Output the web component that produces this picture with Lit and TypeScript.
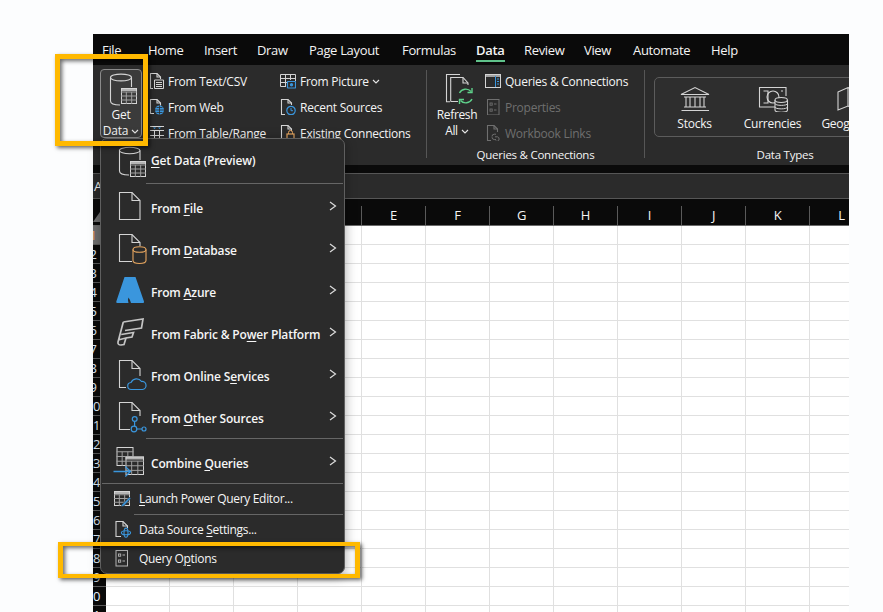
import { LitElement, html, css, svg } from "lit";
import { customElement } from "lit/decorators.js";

const G = "#d4d4d4";
const BLUE = "#3a96dd";
const ORANGE = "#e5a55f";
const GREEN = "#5fd18a";
const DIM = "#6f6f6f";

const line = (d: string, c = G, w = 1.1) => svg`<path d=${d} fill="none" stroke=${c} stroke-width=${w} />`;

const table = (x: number, y: number, w: number, h: number, head = true) => {
  const cw = w / 3;
  const hh = h / 4;
  return svg`
    ${head ? svg`<rect x=${x} y=${y} width=${w} height="3" fill="#b4b4b4" />` : null}
    <rect x=${x + 0.5} y=${y + 0.5} width=${w - 1} height=${h - 1} fill="none" stroke=${G} />
    <path d="M${x + cw} ${y + hh}V${y + h}M${x + 2 * cw} ${y + hh}V${y + h}M${x} ${y + hh}H${x + w}M${x} ${y + 2 * hh}H${x + w}M${x} ${y + 3 * hh}H${x + w}" fill="none" stroke="#a0a0a0" />`;
};

const solidTable = (x: number, y: number, w: number, h: number) => svg`
  <rect x=${x} y=${y} width=${w} height=${h} fill="#2b2b2b" />${table(x, y, w, h)}`;

const cylinder = (x: number, y: number, w: number, h: number, c: string) => svg`
  <path d="M${x} ${y + 3}V${y + h - 3}C${x} ${y + h + 1} ${x + w} ${y + h + 1} ${x + w} ${y + h - 3}V${y + 3}" fill="#2b2b2b" stroke=${c} stroke-width="1.1" />
  <ellipse cx=${x + w / 2} cy=${y + 3} rx=${w / 2} ry="2.8" fill="none" stroke=${c} stroke-width="1.1" />`;

const big = (body: unknown) => html`<svg class="ic34" viewBox="0 0 34 34">${body}</svg>`;
const small = (body: unknown) => html`<svg class="ic20" viewBox="0 0 20 20">${body}</svg>`;
const mini = (body: unknown) => html`<svg class="ic16" viewBox="0 0 16 16">${body}</svg>`;

const dbTable = svg`
  <path d="M6.5 6.5V27C6.5 29.5 10 31 16 31M27 6.5V16" fill="none" stroke=${G} stroke-width="1.1" />
  <ellipse cx="16.7" cy="6.5" rx="10.3" ry="3.2" fill="none" stroke=${G} stroke-width="1.1" />
  ${solidTable(17, 17, 16, 16)}`;

const fileIcon = big(svg`${line("M6.5 3.5H19L27 11.5V30.5H6.5Z")}${line("M19 3.5V11.5H27")}`);
const dbIcon = big(svg`${line("M19 30.5H6.5V3.5H19L27 11.5V15")}${line("M19 3.5V11.5H27")}${cylinder(20, 15.5, 13, 17, ORANGE)}`);
const azureIcon = big(svg`<path d="M11.5 4H22.5L31 28.5Q31.3 30 30 30H18Q17 26.5 15.5 24.5Q14.5 26 15.5 30H4.3Q3 30 3.3 28.5Z" fill=${BLUE} />`);
const fabricIcon = big(svg`${line("M10.3 7L30 4L28.5 13L12 15.5M10.3 7L5 27Q4.5 30 8 30L11 29.5L13 23L19 22L20.5 17.5L8.2 19.5M5 25L13 23", "#c4c4c4", 1.7)}`);
const onlineIcon = big(svg`${line("M13 30.5H6.5V3.5H19L27 11.5V19")}${line("M19 3.5V11.5H27")}${line("M18.5 32.5A3.5 3.5 0 0 1 18 25.5A6 6 0 0 1 28.5 24.5A4 4 0 0 1 29.5 32.5Z", BLUE, 1.2)}`);
const otherIcon = big(svg`${line("M17 30.5H6.5V3.5H19L27 11.5V17")}${line("M19 3.5V11.5H27")}
  <circle cx="21.7" cy="20" r="2.4" fill="none" stroke=${BLUE} stroke-width="1.2" />
  <circle cx="21" cy="30" r="2.8" fill="none" stroke=${BLUE} stroke-width="1.2" />
  <circle cx="31" cy="30" r="2" fill="none" stroke=${BLUE} stroke-width="1.2" />
  ${line("M21.6 22.4V27.2M23.8 30H29", BLUE, 1.2)}`);
const combineIcon = big(svg`${table(3.5, 3, 17, 19, false)}${solidTable(12.5, 12.5, 18.5, 18.5)}
  ${line("M0.5 27.5H17M12.3 22.5L17.5 27.5L12.3 32.5", BLUE, 1.3)}`);

const launchIcon = small(svg`${table(2, 2, 16, 15)}<path d="M17.5 8L10 15.5L9 18L11.8 17L18.8 9.5Z" fill=${BLUE} stroke="#2b2b2b" stroke-width="0.6" />`);
const dsIcon = small(svg`${line("M9 16.5H4V1.5H11L15.5 6V8")}${line("M11 1.5V6H15.5")}
  <ellipse cx="14" cy="12.7" rx="4.6" ry="2" fill="none" stroke=${BLUE} stroke-width="1.1" />
  <ellipse cx="14" cy="12.7" rx="2" ry="4.6" fill="none" stroke=${BLUE} stroke-width="1.1" />`);
const optionsGlyph = (c: string) => svg`
  <rect x="4" y="1.5" width="11.5" height="15.5" fill="none" stroke=${c} />
  <rect x="6.5" y="5" width="2.2" height="2.2" fill="none" stroke=${c} stroke-width="0.9" />
  <rect x="6.5" y="11" width="2.2" height="2.2" fill="none" stroke=${c} stroke-width="0.9" />
  <path d="M10.5 6H13M10.5 12H13" stroke=${c} />`;
const optIcon = small(optionsGlyph("#b4b4b4"));

const textCsv = mini(svg`${line("M5 15.5H2.5V0.5H9L12.5 4V6")}${line("M9 0.5V4H12.5")}<path d="M6.5 7H15.5V15.5H6.5Z M8 9.5H14M8 11.5H14M8 13.5H14" fill="none" stroke=${G} />`);
const webIcon = mini(svg`${line("M6 14.5H2.5V0.5H9L12.5 4V6.5")}${line("M9 0.5V4H12.5")}
  <circle cx="11.5" cy="11" r="4.5" fill=${BLUE} />
  <path d="M7 11H16M11.5 6.5V15.5M8.5 8.5H14.5M8.5 13.5H14.5" stroke="#2b2b2b" stroke-width="0.8" />`);
const rangeIcon = mini(svg`<path d="M2 1.5H16M2 15.5H16M2 5.5H16M2 10.5H16M6.5 5.5V16M11.5 5.5V16" fill="none" stroke=${G} /><path d="M5 2.5L6.5 4L8 2.5ZM10 2.5L11.5 4L13 2.5Z" fill=${BLUE} />`);
const pictureIcon = mini(svg`<path d="M0.5 1.5H15.5V8M0.5 1.5V13.5H6M0.5 5.5H15.5M5.5 1.5V13M10.5 1.5V7M0.5 9.5H7" fill="none" stroke=${G} />
  <rect x="7.5" y="8.5" width="8" height="6.5" rx="0.5" fill="#2b2b2b" stroke=${BLUE} stroke-width="1.2" />
  <circle cx="11.5" cy="11.8" r="1.7" fill=${BLUE} />`);
const recentIcon = mini(svg`${line("M5 15.5H1.5V0.5H8L11.5 4V6")}${line("M8 0.5V4H11.5")}
  <circle cx="11" cy="11.5" r="4.2" fill="#2b2b2b" stroke=${BLUE} stroke-width="1.2" />
  <path d="M11 9V11.7H13" fill="none" stroke=${BLUE} />`);
const existingIcon = mini(svg`${line("M5 15.5H1.5V0.5H8L11.5 4V6")}${line("M8 0.5V4H11.5")}
  <rect x="7" y="9" width="7" height="7" fill="#2b2b2b" stroke=${ORANGE} stroke-width="1.2" />
  <path d="M8.5 9V7.5A2 2 0 0 1 12.5 7.5V9" fill="none" stroke=${ORANGE} />`);
const qcIcon = mini(svg`<rect x="0.5" y="1.5" width="15" height="13" fill="none" stroke=${G} />
  <path d="M0.5 3H15.5" stroke=${G} stroke-width="1.4" /><path d="M10.5 3V14" stroke=${BLUE} /><path d="M12 6H14M12 8.5H14M12 11H14" stroke=${BLUE} />`);
const propIcon = mini(svg`<g transform="translate(-1.5 -1)">${optionsGlyph(DIM)}</g>`);
const linksIcon = mini(svg`${line("M6 15.5H2.5V0.5H9L12.5 4V7", DIM)}${line("M9 0.5V4H12.5", DIM)}
  <path d="M7 11.5A2.3 2.3 0 0 1 9.3 9.2H11M11 14.5H9.3A2.3 2.3 0 0 1 7 12.2M10 11.8H12.5A2.3 2.3 0 0 1 12.5 16.2H10" fill="none" stroke=${DIM} />`);

const chevDown = html`<svg class="chev" viewBox="0 0 8 5"><path d="M1 1L4 4L7 1" fill="none" stroke="#e6e6e6" stroke-width="1.1" /></svg>`;
const chevRight = html`<svg class="arrow" viewBox="0 0 8 10"><path d="M1 1L6.5 5L1 9" fill="none" stroke="#dcdcdc" stroke-width="1.2" /></svg>`;

const getDataIcon = html`<svg class="ic-lg" viewBox="0 0 40 37">
  <path d="M9.5 7.5V31C9.5 33.5 13 35 19 35M30.5 7.5V17" fill="none" stroke=${G} stroke-width="1.1" />
  <ellipse cx="20" cy="7.5" rx="10.5" ry="3.4" fill="none" stroke=${G} stroke-width="1.1" />
  <rect x="20" y="18" width="16" height="16" fill="#3b3b3b" />${table(20, 18, 16, 16)}</svg>`;

const refreshIcon = html`<svg class="ic-lg" viewBox="0 0 40 39">
  ${line("M13 33.7H9.5V6.5H23")}
  ${line("M13.7 33.5V9.5H26L31 15V17M13.7 33.5H21")}${line("M26 9.5V15H31")}
  <path d="M22.5 25A7 7 0 0 1 34 23.5M35 31A7 7 0 0 1 23.5 32.5" fill="none" stroke=${GREEN} stroke-width="1.4" />
  <path d="M35 20V24.5H30.5M22.5 36V31.5H27" fill="none" stroke=${GREEN} stroke-width="1.4" /></svg>`;

const stocksIcon = html`<svg class="ic-card" viewBox="0 0 32 26">
  <path d="M2 8.5L16 1.5L30 8.5ZM5 11H27M7 11V21M11 11V21M16 11V21M21 11V21M25 11V21M5 21H27M2.5 24.5H29.5V24" fill="none" stroke=${G} stroke-width="1.1" /></svg>`;
const currencyIcon = html`<svg class="ic-card" viewBox="0 0 32 26">
  <path d="M18 21H2.5V1.5H29V10M6.5 5H11V17H6.5M24 5H26" fill="none" stroke=${G} stroke-width="1.1" />
  <circle cx="16" cy="11" r="6" fill="none" stroke=${G} stroke-width="1.1" />
  <path d="M18 14V24C18 27 30.5 27 30.5 24V14" fill="#2b2b2b" stroke=${G} stroke-width="1.1" />
  <ellipse cx="24.2" cy="14" rx="6.2" ry="2.5" fill="#2b2b2b" stroke=${G} stroke-width="1.1" />
  <path d="M18 17.5C18 20 30.5 20 30.5 17.5M18 21C18 23.5 30.5 23.5 30.5 21" fill="none" stroke=${G} /></svg>`;
const geoIcon = html`<svg class="ic-card" viewBox="0 0 32 26">
  <path d="M3 6L13 1.5L23 6L30 2V20L23 24L13 20L3 24ZM13 1.5V20M23 6V24" fill="none" stroke=${G} stroke-width="1.1" /></svg>`;

const TABS = [
  { t: "File", w: 46 }, { t: "Home", w: 56 }, { t: "Insert", w: 53 }, { t: "Draw", w: 52 },
  { t: "Page Layout", w: 93 }, { t: "Formulas", w: 74 }, { t: "Data", w: 48, on: true }, { t: "Review", w: 60 },
  { t: "View", w: 49 }, { t: "Automate", w: 78 }, { t: "Help", w: 40 },
];
const COLS = "ABCDEFGHIJKL".split("");
const ROWS = Array.from({ length: 21 }, (_, i) => i + 1);

@customElement("app-root")
export class AppRoot extends LitElement {
  static styles = css`
    :host {
      display: block;
      position: relative;
      width: 883px;
      height: 612px;
      overflow: hidden;
      box-sizing: border-box;
      padding: 34px 34px 0 93px;
      background: #fcfdfe;
      font-family: "Open Sans", "Noto Sans", sans-serif;
      font-size: 12px;
      letter-spacing: -0.25px;
      color: #f4f4f4;
    }
    svg { display: block; flex: none; }
    u { text-underline-offset: 2px; text-decoration-thickness: 1px; }
    .win { width: 756px; height: 578px; overflow: hidden; background: #fff; }

    .tabs { display: flex; height: 31px; background: #0a0a0a; padding-left: 9px; box-sizing: border-box; font-size: 13px; letter-spacing: -0.33px; }
    .tab { flex: none; height: 31px; line-height: 32px; white-space: nowrap; position: relative; }
    .tab.on { font-weight: 600; }
    .tab.on::after { content: ""; position: absolute; left: 0; top: 26px; width: 29px; height: 2px; background: #5fc28a; }

    .ribbon { display: flex; height: 100px; box-sizing: border-box; padding-top: 3px; background: #2b2b2b; overflow: hidden; }
    .vsep { flex: none; width: 1px; height: 88px; margin-top: 2px; background: #565656; }
    .group { flex: none; display: flex; flex-direction: column; height: 95px; }
    .g1 { width: 333px; }
    .g2 { width: 217px; }
    .g3 { width: 280px; }
    .gbody { display: flex; height: 78px; }
    .glabel { height: 16px; line-height: 17px; text-align: center; font-size: 11.5px; white-space: nowrap; }
    .col { flex: none; display: flex; flex-direction: column; }
    .row { height: 26px; display: flex; align-items: center; gap: 4px; white-space: nowrap; }
    .row.dim { color: #6f6f6f; }
    .ic16 { width: 16px; height: 16px; }
    .c2 { width: 132px; margin-left: 6px; }
    .bigbtn { flex: none; display: flex; flex-direction: column; align-items: center; line-height: 16px; white-space: nowrap; }
    .getdata { width: 42px; height: 69px; box-sizing: border-box; margin: 1px 0 0 7px; background: #3b3b3b; border: 1px solid #8b8b8b; border-radius: 4px; }
    .ic-lg { width: 40px; }
    .getdata .ic-lg { height: 37px; }
    .refresh { width: 40px; margin: 0 8px 0 10px; letter-spacing: -0.35px; }
    .refresh .ic-lg { height: 39px; }
    .lbl2 { display: flex; align-items: center; gap: 3px; }
    .chev { width: 8px; height: 5px; }
    .dtbox { display: flex; width: 262px; height: 60px; box-sizing: border-box; margin: 9px 0 0 9px; border: 1px solid #5c5c5c; border-radius: 5px; background: #2e2e2e; }
    .card { flex: none; box-sizing: border-box; padding-top: 8px; display: flex; flex-direction: column; align-items: center; gap: 4px; line-height: 16px; }
    .ic-card { width: 32px; height: 26px; }
    .cs { width: 79px; }
    .cc { width: 77px; }
    .cg { width: 80px; }

    .band { height: 8px; background: #0a0a0a; }
    .fbar { height: 26px; box-sizing: border-box; background: #2b2b2b; border-top: 1px solid #565656; border-bottom: 1px solid #565656; padding-left: 1px; line-height: 24px; font-size: 13px; white-space: nowrap; }
    .hdr { display: flex; height: 27px; box-sizing: border-box; background: #0a0a0a; border-bottom: 1px solid #6a6a6a; }
    .corner { flex: none; width: 13px; display: flex; align-items: flex-end; }
    .corner svg { width: 13px; height: 13px; margin-bottom: 3px; }
    .ch { flex: none; width: 64px; box-sizing: border-box; margin-top: 7px; border-right: 1px solid #5a5a5a; text-align: center; font-size: 13px; line-height: 19px; }
    .gr { display: flex; height: 19px; box-sizing: border-box; }
    .rh { flex: none; width: 13px; height: 19px; box-sizing: border-box; background: #0a0a0a; border-bottom: 1px solid #5a5a5a; overflow: hidden; }
    .rh span { display: block; width: 26px; margin-left: -13px; text-align: center; font-size: 13px; line-height: 18px; color: #e4f0fb; }
    .rh.sel { background: #707070; }
    .rh.sel span { color: #f0a35e; }
    .cell { flex: none; width: 64px; box-sizing: border-box; border-right: 1px solid #e0e0e0; border-bottom: 1px solid #e0e0e0; }

    .menu { position: absolute; left: 100px; top: 138px; width: 245px; height: 436px; box-sizing: border-box; background: #2b2b2b; border: 1px solid #5f5f5f; border-radius: 7px; box-shadow: 0 2px 12px rgba(0,0,0,.35); font-weight: 600; letter-spacing: -0.18px; color: #f6f6f6; }
    .mi { display: flex; align-items: center; height: 42px; padding: 0 7px 0 12px; gap: 4px; white-space: nowrap; }
    .mi .t { flex: 1; padding-top: 4px; }
    .mi.head { height: 44px; }
    .mi.head .t { padding: 0 0 1px; }
    .mi.comb { height: 44px; }
    .mi.sm { height: 30px; padding-left: 11px; gap: 7px; font-weight: 400; letter-spacing: -0.32px; }
    .mi.sm .t { padding: 0 0 2px; }
    .mi.last { height: 28px; }
    .ic34 { width: 34px; height: 34px; overflow: visible; }
    .ic20 { width: 20px; height: 20px; }
    .arrow { width: 8px; height: 10px; }
    .msep { height: 1px; background: #666; margin: 0 1px 0 45px; }
    .msep.first { margin-bottom: 1px; }
    .msep.gap { margin-top: 1px; }
    .msep.full { margin-left: 1px; }
    .msep.sub { margin-left: 33px; }

    .callout { position: absolute; box-sizing: border-box; border: 5px solid #ffb900; box-shadow: 2px 2px 4px rgba(0,0,0,.6), inset 2px 2px 4px rgba(0,0,0,.6); pointer-events: none; }
    .c-a { left: 55px; top: 54px; width: 93px; height: 92px; }
    .c-b { left: 58px; top: 542px; width: 302px; height: 36px; border-width: 4px 5px; }
  `;

  render() {
    return html`
      <div class="win">
        <div class="tabs">
          ${TABS.map((t) => html`<div class="tab ${t.on ? "on" : ""}" style="width:${t.w}px">${t.t}</div>`)}
        </div>
        <div class="ribbon">
          <div class="group g1">
            <div class="gbody">
              <div class="bigbtn getdata">${getDataIcon}<div>Get</div><div class="lbl2">Data ${chevDown}</div></div>
              <div class="col c2">
                <div class="row">${textCsv}From Text/CSV</div>
                <div class="row">${webIcon}From Web</div>
                <div class="row">${rangeIcon}From Table/Range</div>
              </div>
              <div class="col">
                <div class="row">${pictureIcon}<span class="lbl2">From Picture ${chevDown}</span></div>
                <div class="row">${recentIcon}Recent Sources</div>
                <div class="row">${existingIcon}Existing Connections</div>
              </div>
            </div>
          </div>
          <div class="vsep"></div>
          <div class="group g2">
            <div class="gbody">
              <div class="bigbtn refresh">${refreshIcon}<div>Refresh</div><div class="lbl2">All ${chevDown}</div></div>
              <div class="col">
                <div class="row">${qcIcon}Queries &amp; Connections</div>
                <div class="row dim">${propIcon}Properties</div>
                <div class="row dim">${linksIcon}Workbook Links</div>
              </div>
            </div>
            <div class="glabel">Queries &amp; Connections</div>
          </div>
          <div class="vsep"></div>
          <div class="group g3">
            <div class="gbody">
              <div class="dtbox">
                <div class="card cs">${stocksIcon}<div>Stocks</div></div>
                <div class="card cc">${currencyIcon}<div>Currencies</div></div>
                <div class="card cg">${geoIcon}<div>Geography</div></div>
              </div>
            </div>
            <div class="glabel">Data Types</div>
          </div>
        </div>
        <div class="band"></div>
        <div class="fbar">A1</div>
        <div class="hdr">
          <div class="corner"><svg viewBox="0 0 13 13"><polygon points="0,13 9,0 13,0 13,13" fill="#6e6e6e" /></svg></div>
          ${COLS.map((c) => html`<div class="ch">${c}</div>`)}
        </div>
        ${ROWS.map((r) => html`<div class="gr">
          <div class="rh ${r === 1 ? "sel" : ""}"><span>${r}</span></div>
          ${COLS.map(() => html`<div class="cell"></div>`)}
        </div>`)}
      </div>

      <div class="menu">
        <div class="mi head">${big(dbTable)}<div class="t"><u>G</u>et Data (Preview)</div></div>
        <div class="msep first"></div>
        <div class="mi">${fileIcon}<div class="t">From <u>F</u>ile</div>${chevRight}</div>
        <div class="mi">${dbIcon}<div class="t">From <u>D</u>atabase</div>${chevRight}</div>
        <div class="mi">${azureIcon}<div class="t">From <u>A</u>zure</div>${chevRight}</div>
        <div class="mi">${fabricIcon}<div class="t">From Fabric &amp; Po<u>w</u>er Platform</div>${chevRight}</div>
        <div class="mi">${onlineIcon}<div class="t">From Online S<u>e</u>rvices</div>${chevRight}</div>
        <div class="mi">${otherIcon}<div class="t">From <u>O</u>ther Sources</div>${chevRight}</div>
        <div class="msep gap"></div>
        <div class="mi comb">${combineIcon}<div class="t">Combine <u>Q</u>ueries</div>${chevRight}</div>
        <div class="msep full"></div>
        <div class="mi sm">${launchIcon}<div class="t"><u>L</u>aunch Power Query Editor...</div></div>
        <div class="msep sub"></div>
        <div class="mi sm">${dsIcon}<div class="t">Data Source <u>S</u>ettings...</div></div>
        <div class="mi sm last">${optIcon}<div class="t">Query O<u>p</u>tions</div></div>
      </div>

      <div class="callout c-a"></div>
      <div class="callout c-b"></div>
    `;
  }
}
